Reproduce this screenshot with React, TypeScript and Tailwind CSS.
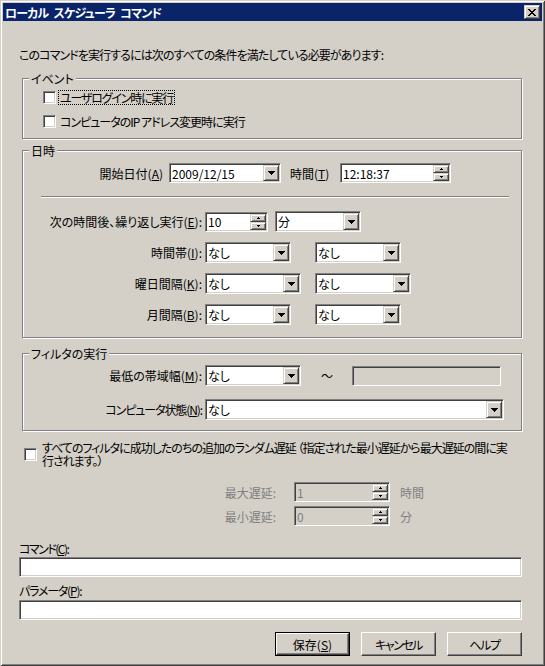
import React from 'react';

const sunken =
  'border border-t-[#808080] border-l-[#808080] border-b-white border-r-white shadow-[inset_1px_1px_0_#404040,inset_-1px_-1px_0_#d4d0c8]';
const raised =
  'bg-[#d4d0c8] border border-t-[#d4d0c8] border-l-[#d4d0c8] border-b-[#404040] border-r-[#404040] shadow-[inset_1px_1px_0_#fff,inset_-1px_-1px_0_#808080]';

function DownArrow() {
  return (
    <svg width="7" height="4" shapeRendering="crispEdges">
      <rect x="0" y="0" width="7" height="1" fill="#000" />
      <rect x="1" y="1" width="5" height="1" fill="#000" />
      <rect x="2" y="2" width="3" height="1" fill="#000" />
      <rect x="3" y="3" width="1" height="1" fill="#000" />
    </svg>
  );
}

function TinyArrow({ up }: { up?: boolean }) {
  return (
    <svg width="3" height="2" shapeRendering="crispEdges">
      <rect x="1" y={up ? 0 : 1} width="1" height="1" fill="#000" />
      <rect x="0" y={up ? 1 : 0} width="3" height="1" fill="#000" />
    </svg>
  );
}

function Combo({ className, value }: { className: string; value: string }) {
  return (
    <div className={`flex bg-white ${sunken} ${className}`}>
      <span className="flex flex-1 items-center pl-[2px] whitespace-nowrap">{value}</span>
      <div className={`m-[1px] flex w-[16px] items-center justify-center ${raised}`}>
        <DownArrow />
      </div>
    </div>
  );
}

function Spin({ className, value, disabled }: { className: string; value: string; disabled?: boolean }) {
  return (
    <div className={`flex h-[20px] ${disabled ? 'bg-[#d4d0c8] text-[#808080]' : 'bg-white'} ${sunken} ${className}`}>
      <span className="flex flex-1 items-center pl-[2px]">{value}</span>
      <div className="m-[1px] flex w-[16px] flex-col">
        <div className={`flex flex-1 items-center justify-center ${raised}`}>
          <TinyArrow up />
        </div>
        <div className={`flex flex-1 items-center justify-center ${raised}`}>
          <TinyArrow />
        </div>
      </div>
    </div>
  );
}

function Check() {
  return <div className={`h-[13px] w-[13px] shrink-0 bg-white ${sunken}`} />;
}

function Group({ label, className, children }: { label: string; className: string; children?: React.ReactNode }) {
  return (
    <div
      className={`relative ml-[3px] w-[500px] border border-[#808080] shadow-[inset_1px_1px_0_#fff,1px_1px_0_#fff] ${className}`}
    >
      <span className="absolute -top-[7px] left-[6px] bg-[#d4d0c8] px-[2px] leading-[13px]">{label}</span>
      {children}
    </div>
  );
}

function Label({ className, children }: { className: string; children: React.ReactNode }) {
  return <span className={`flex shrink-0 justify-end whitespace-nowrap ${className}`}>{children}</span>;
}

function Btn({ children, primary }: { children: React.ReactNode; primary?: boolean }) {
  const face =
    'flex h-full w-full items-center justify-center border border-t-white border-l-white border-b-[#404040] border-r-[#404040] shadow-[inset_-1px_-1px_0_#808080]';
  if (primary) {
    return (
      <div className="h-[24px] w-[75px] border border-black">
        <div className={face}>{children}</div>
      </div>
    );
  }
  return (
    <div className="h-[24px] w-[75px]">
      <div className={face}>{children}</div>
    </div>
  );
}

export default function App() {
  return (
    <div className="h-[666px] w-[545px] bg-[#d4d0c8] p-[3px] font-['Noto_Sans_CJK_JP',sans-serif] text-[12px] leading-[13px] text-black [font-feature-settings:'palt'] shadow-[inset_1px_1px_0_#d4d0c8,inset_-1px_-1px_0_#404040,inset_2px_2px_0_#fff,inset_-2px_-2px_0_#808080]">
      {/* title bar */}
      <div className="flex h-[18px] items-center justify-between bg-[#0a246a] pl-[2px]">
        <span className="flex gap-[5px] font-bold tracking-[-0.8px] text-white">
          <span>ローカル</span>
          <span>スケジューラ</span>
          <span>コマンド</span>
        </span>
        <div className={`mr-[2px] flex h-[14px] w-[16px] items-center justify-center ${raised}`}>
          <svg width="8" height="7" shapeRendering="crispEdges">
            {[0, 1, 2, 3, 4, 5, 6].map((i) => (
              <g key={i}>
                <rect x={i} y={i} width="2" height="1" fill="#000" />
                <rect x={6 - i} y={i} width="2" height="1" fill="#000" />
              </g>
            ))}
          </svg>
        </div>
      </div>

      <div className="pl-[16px]">
        <p className="mt-[27px] h-[13px] whitespace-nowrap tracking-[-0.9px]">
          このコマンドを実行するには次のすべての条件を満たしている必要があります:
        </p>

        {/* event */}
        <Group label="イベント" className="mt-[17px] h-[61px]">
          <div className="mt-[11px] ml-[20px] flex h-[15px] items-center">
            <Check />
            <span className="ml-[2px] border border-dotted border-black px-[1px] tracking-[-1.2px]">
              ユーザログイン時に実行
            </span>
          </div>
          <div className="mt-[9px] ml-[20px] flex h-[15px] items-center">
            <Check />
            <span className="ml-[2px] border border-transparent px-[1px] tracking-[-1px]">
              コンピュータのIP アドレス変更時に実行
            </span>
          </div>
        </Group>

        {/* date/time */}
        <Group label="日時" className="mt-[11px] h-[188px]">
          <div className="mt-[12px] flex h-[20px] items-center">
            <Label className="w-[140px]">
              開始日付(<u>A</u>)
            </Label>
            <Combo className="ml-[6px] h-[20px] w-[112px]" value="2009/12/15" />
            <Label className="ml-[9px] w-[41px] !justify-start">
              時間(<u>T</u>)
            </Label>
            <Spin className="ml-[9px] w-[111px]" value="12:18:37" />
          </div>
          <div className="mt-[13px] ml-[18px] h-[2px] w-[468px] border-t border-b border-t-[#808080] border-b-white" />
          <div className="mt-[13px] flex h-[21px] items-center">
            <Label className="w-[179px]">
              次の時間後、繰り返し実行(<u>E</u>):
            </Label>
            <Spin className="ml-[3px] w-[63px]" value="10" />
            <Combo className="ml-[7px] h-[21px] w-[86px]" value="分" />
          </div>
          <div className="mt-[10px] flex h-[21px] items-center">
            <Label className="w-[179px]">
              時間帯(<u>I</u>):
            </Label>
            <Combo className="ml-[3px] h-[21px] w-[86px]" value="なし" />
            <Combo className="ml-[24px] h-[21px] w-[86px]" value="なし" />
          </div>
          <div className="mt-[10px] flex h-[21px] items-center">
            <Label className="w-[179px]">
              曜日間隔(<u>K</u>):
            </Label>
            <Combo className="ml-[3px] h-[21px] w-[96px]" value="なし" />
            <Combo className="ml-[14px] h-[21px] w-[96px]" value="なし" />
          </div>
          <div className="mt-[10px] flex h-[21px] items-center">
            <Label className="w-[179px]">
              月間隔(<u>B</u>):
            </Label>
            <Combo className="ml-[3px] h-[21px] w-[86px]" value="なし" />
            <Combo className="ml-[24px] h-[21px] w-[86px]" value="なし" />
          </div>
        </Group>

        {/* filter */}
        <Group label="フィルタの実行" className="mt-[15px] h-[78px]">
          <div className="mt-[11px] flex h-[21px] items-center">
            <Label className="w-[179px]">
              最低の帯域幅(<u>M</u>):
            </Label>
            <Combo className="ml-[3px] h-[21px] w-[96px]" value="なし" />
            <span className="ml-[20px]">〜</span>
            <div className={`ml-[19px] h-[20px] w-[149px] ${sunken}`} />
          </div>
          <div className="mt-[13px] flex h-[21px] items-center">
            <Label className="w-[179px] tracking-[-1.1px]">
              コンピュータ状態(<u>N</u>):
            </Label>
            <Combo className="ml-[3px] h-[21px] w-[299px]" value="なし" />
          </div>
        </Group>

        {/* random delay */}
        <div className="mt-[10px] flex items-center">
          <div className="ml-[5px]">
            <Check />
          </div>
          <p className="ml-[5px] whitespace-nowrap leading-[13px] tracking-[-1px]">
            すべてのフィルタに成功したのちの追加のランダム遅延 （指定された最小遅延から最大遅延の間に実
            <br />
            行されます。）
          </p>
        </div>
        <div className="mt-[15px] flex h-[20px] items-center text-[#808080]">
          <Label className="w-[257px]">最大遅延:</Label>
          <Spin className="ml-[18px] w-[96px]" value="1" disabled />
          <span className="ml-[10px]">時間</span>
        </div>
        <div className="mt-[4px] flex h-[20px] items-center text-[#808080]">
          <Label className="w-[257px]">最小遅延:</Label>
          <Spin className="ml-[18px] w-[96px]" value="0" disabled />
          <span className="ml-[10px]">分</span>
        </div>

        {/* command */}
        <p className="mt-[16px] h-[13px] tracking-[-1.5px]">
          コマンド(<u>C</u>):
        </p>
        <div className={`mt-[2px] h-[20px] w-[503px] bg-white ${sunken}`} />
        <p className="mt-[7px] h-[13px] tracking-[-1.2px]">
          パラメータ(<u>P</u>):
        </p>
        <div className={`mt-[3px] h-[20px] w-[503px] bg-white ${sunken}`} />

        <div className="mt-[12px] flex w-[503px] justify-end gap-[11px]">
          <Btn primary>
            保存(<u>S</u>)
          </Btn>
          <Btn>
            <span className="tracking-[-1.5px]">キャンセル</span>
          </Btn>
          <Btn>
            <span className="tracking-[-1.2px]">ヘルプ</span>
          </Btn>
        </div>
      </div>
    </div>
  );
}
